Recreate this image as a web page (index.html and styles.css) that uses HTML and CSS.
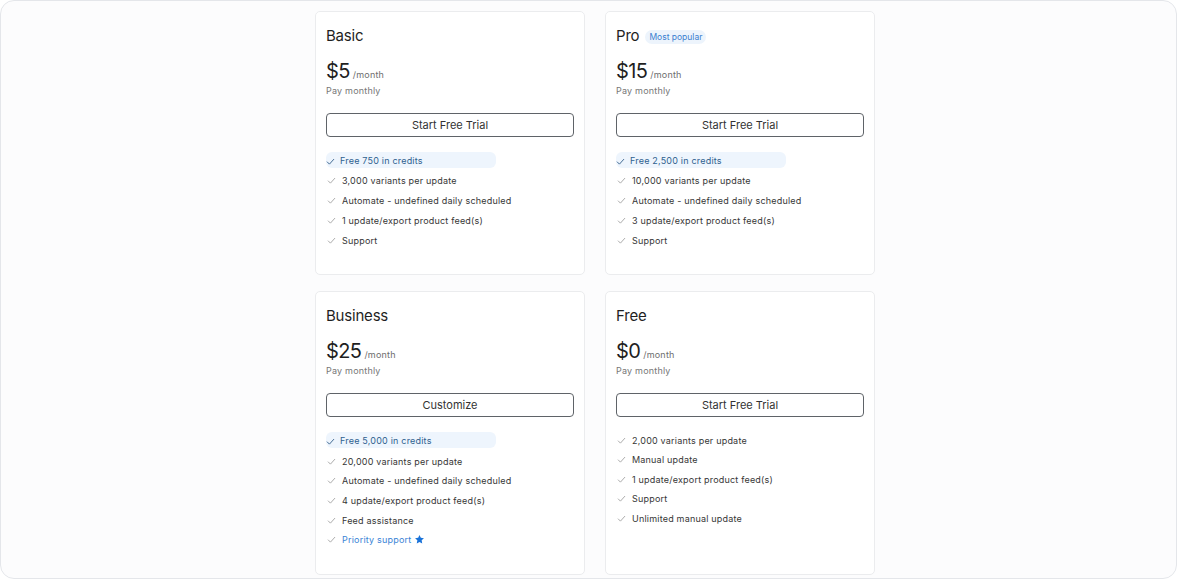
FILE: index.html
```html
<!DOCTYPE html>
<html lang="en">
<head>
<meta charset="utf-8">
<title>Pricing</title>
<link rel="stylesheet" href="styles.css">
</head>
<body>
<div class="frame">
  <div class="grid">
    <section class="card">
      <h2 class="title">Basic</h2>
      <div class="price"><span class="amount">$5</span><span class="per">/month</span></div>
      <div class="pay">Pay monthly</div>
      <button class="btn">Start Free Trial</button>
      <ul class="features">
        <li class="feat hl"><svg class="chk" viewBox="0 0 10 8"><path d="M1 4.2 L3.8 7 L9 1.2"/></svg>Free 750 in credits</li>
        <li class="feat"><svg class="chk" viewBox="0 0 10 8"><path d="M1 4.2 L3.8 7 L9 1.2"/></svg>3,000 variants per update</li>
        <li class="feat"><svg class="chk" viewBox="0 0 10 8"><path d="M1 4.2 L3.8 7 L9 1.2"/></svg>Automate - undefined daily scheduled</li>
        <li class="feat"><svg class="chk" viewBox="0 0 10 8"><path d="M1 4.2 L3.8 7 L9 1.2"/></svg>1 update/export product feed(s)</li>
        <li class="feat"><svg class="chk" viewBox="0 0 10 8"><path d="M1 4.2 L3.8 7 L9 1.2"/></svg>Support</li>
      </ul>
    </section>
    <section class="card">
      <h2 class="title">Pro <span class="badge">Most popular</span></h2>
      <div class="price"><span class="amount">$15</span><span class="per">/month</span></div>
      <div class="pay">Pay monthly</div>
      <button class="btn">Start Free Trial</button>
      <ul class="features">
        <li class="feat hl"><svg class="chk" viewBox="0 0 10 8"><path d="M1 4.2 L3.8 7 L9 1.2"/></svg>Free 2,500 in credits</li>
        <li class="feat"><svg class="chk" viewBox="0 0 10 8"><path d="M1 4.2 L3.8 7 L9 1.2"/></svg>10,000 variants per update</li>
        <li class="feat"><svg class="chk" viewBox="0 0 10 8"><path d="M1 4.2 L3.8 7 L9 1.2"/></svg>Automate - undefined daily scheduled</li>
        <li class="feat"><svg class="chk" viewBox="0 0 10 8"><path d="M1 4.2 L3.8 7 L9 1.2"/></svg>3 update/export product feed(s)</li>
        <li class="feat"><svg class="chk" viewBox="0 0 10 8"><path d="M1 4.2 L3.8 7 L9 1.2"/></svg>Support</li>
      </ul>
    </section>
    <section class="card">
      <h2 class="title">Business</h2>
      <div class="price"><span class="amount">$25</span><span class="per">/month</span></div>
      <div class="pay">Pay monthly</div>
      <button class="btn">Customize</button>
      <ul class="features">
        <li class="feat hl"><svg class="chk" viewBox="0 0 10 8"><path d="M1 4.2 L3.8 7 L9 1.2"/></svg>Free 5,000 in credits</li>
        <li class="feat"><svg class="chk" viewBox="0 0 10 8"><path d="M1 4.2 L3.8 7 L9 1.2"/></svg>20,000 variants per update</li>
        <li class="feat"><svg class="chk" viewBox="0 0 10 8"><path d="M1 4.2 L3.8 7 L9 1.2"/></svg>Automate - undefined daily scheduled</li>
        <li class="feat"><svg class="chk" viewBox="0 0 10 8"><path d="M1 4.2 L3.8 7 L9 1.2"/></svg>4 update/export product feed(s)</li>
        <li class="feat"><svg class="chk" viewBox="0 0 10 8"><path d="M1 4.2 L3.8 7 L9 1.2"/></svg>Feed assistance</li>
        <li class="feat link"><svg class="chk" viewBox="0 0 10 8"><path d="M1 4.2 L3.8 7 L9 1.2"/></svg>Priority support<svg class="star" viewBox="0 0 24 24"><path d="M12 2.2l2.9 6.2 6.8.8-5 4.7 1.3 6.7L12 17.3l-6 3.3 1.3-6.7-5-4.7 6.8-.8z"/></svg></li>
      </ul>
    </section>
    <section class="card">
      <h2 class="title">Free</h2>
      <div class="price"><span class="amount">$0</span><span class="per">/month</span></div>
      <div class="pay">Pay monthly</div>
      <button class="btn">Start Free Trial</button>
      <ul class="features plain">
        <li class="feat"><svg class="chk" viewBox="0 0 10 8"><path d="M1 4.2 L3.8 7 L9 1.2"/></svg>2,000 variants per update</li>
        <li class="feat"><svg class="chk" viewBox="0 0 10 8"><path d="M1 4.2 L3.8 7 L9 1.2"/></svg>Manual update</li>
        <li class="feat"><svg class="chk" viewBox="0 0 10 8"><path d="M1 4.2 L3.8 7 L9 1.2"/></svg>1 update/export product feed(s)</li>
        <li class="feat"><svg class="chk" viewBox="0 0 10 8"><path d="M1 4.2 L3.8 7 L9 1.2"/></svg>Support</li>
        <li class="feat"><svg class="chk" viewBox="0 0 10 8"><path d="M1 4.2 L3.8 7 L9 1.2"/></svg>Unlimited manual update</li>
      </ul>
    </section>
  </div>
</div>
</body>
</html>
```
FILE: styles.css
```css
* { box-sizing: border-box; }
html, body { margin: 0; padding: 0; background: #ffffff; }
body {
  font-family: Inter, "Noto Sans", "Liberation Sans", sans-serif;
  color: #222;
}
.frame {
  width: 1177px;
  height: 579px;
  border: 1px solid #e4e6ea;
  border-radius: 14px;
  background: #fcfcfd;
  padding: 10px 0 0 13px;
  overflow: hidden;
}
.grid {
  display: grid;
  grid-template-columns: 270px 270px;
  column-gap: 20px;
  row-gap: 16px;
  justify-content: center;
}
.card {
  background: #fff;
  border: 1px solid #ebecee;
  border-radius: 5px;
  padding: 12px 10px 26px 10px;
  display: flex;
  flex-direction: column;
}
.title {
  margin: 0;
  height: 24px;
  font-size: 15px;
  letter-spacing: -0.2px;
  line-height: 24px;
  font-weight: 400;
  color: #1f1f1f;
  display: flex;
  align-items: center;
  gap: 6px;
}
.badge {
  font-size: 8.5px;
  letter-spacing: 0;
  line-height: 14px;
  padding: 0 4px;
  margin-top: 2px;
  border-radius: 7px;
  background: #edf4fc;
  color: #3a7fd0;
  font-weight: 400;
}
.price {
  margin-top: 10px;
  height: 26px;
  line-height: 26px;
  display: flex;
  align-items: baseline;
  gap: 3px;
  overflow: hidden;
}
.amount {
  font-size: 20px;
  letter-spacing: -0.6px;
  color: #1f1f1f;
}
.per {
  font-size: 9px;
  letter-spacing: 0.2px;
  color: #6d6d6d;
}
.pay {
  height: 14px;
  font-size: 9px;
  line-height: 14px;
  color: #777;
  letter-spacing: 0.2px;
}
.btn {
  margin-top: 15px;
  height: 24px;
  width: 100%;
  border: 1px solid #5f6368;
  border-radius: 4px;
  background: #fff;
  font-family: inherit;
  font-size: 11px;
  color: #333;
  padding: 0;
}
.features {
  list-style: none;
  margin: 15px 0 0 0;
  padding: 0;
  display: flex;
  flex-direction: column;
  gap: 3.7px;
}
.feat {
  height: 16px;
  display: flex;
  align-items: center;
  font-size: 9px;
  letter-spacing: 0.2px;
  color: #363636;
  padding-left: 1px;
}
.feat .chk {
  width: 9px;
  height: 7px;
  margin-right: 6px;
  fill: none;
  stroke: #a8a8a8;
  stroke-width: 1.1;
  flex: none;
}
.feat.hl {
  width: 170px;
  background: #eef5fd;
  border-radius: 6px;
  color: #2f5f8f;
  padding-left: 0;
  margin-bottom: 1.3px;
}
.feat.hl .chk {
  stroke: #3d6690;
  margin-right: 5px;
  margin-top: 2px;
}
.feat.link { color: #3a84d6; }
.star {
  width: 11px;
  height: 11px;
  fill: #1a73d9;
  margin-left: 3px;
}
.plain { gap: 3.6px; }
```
